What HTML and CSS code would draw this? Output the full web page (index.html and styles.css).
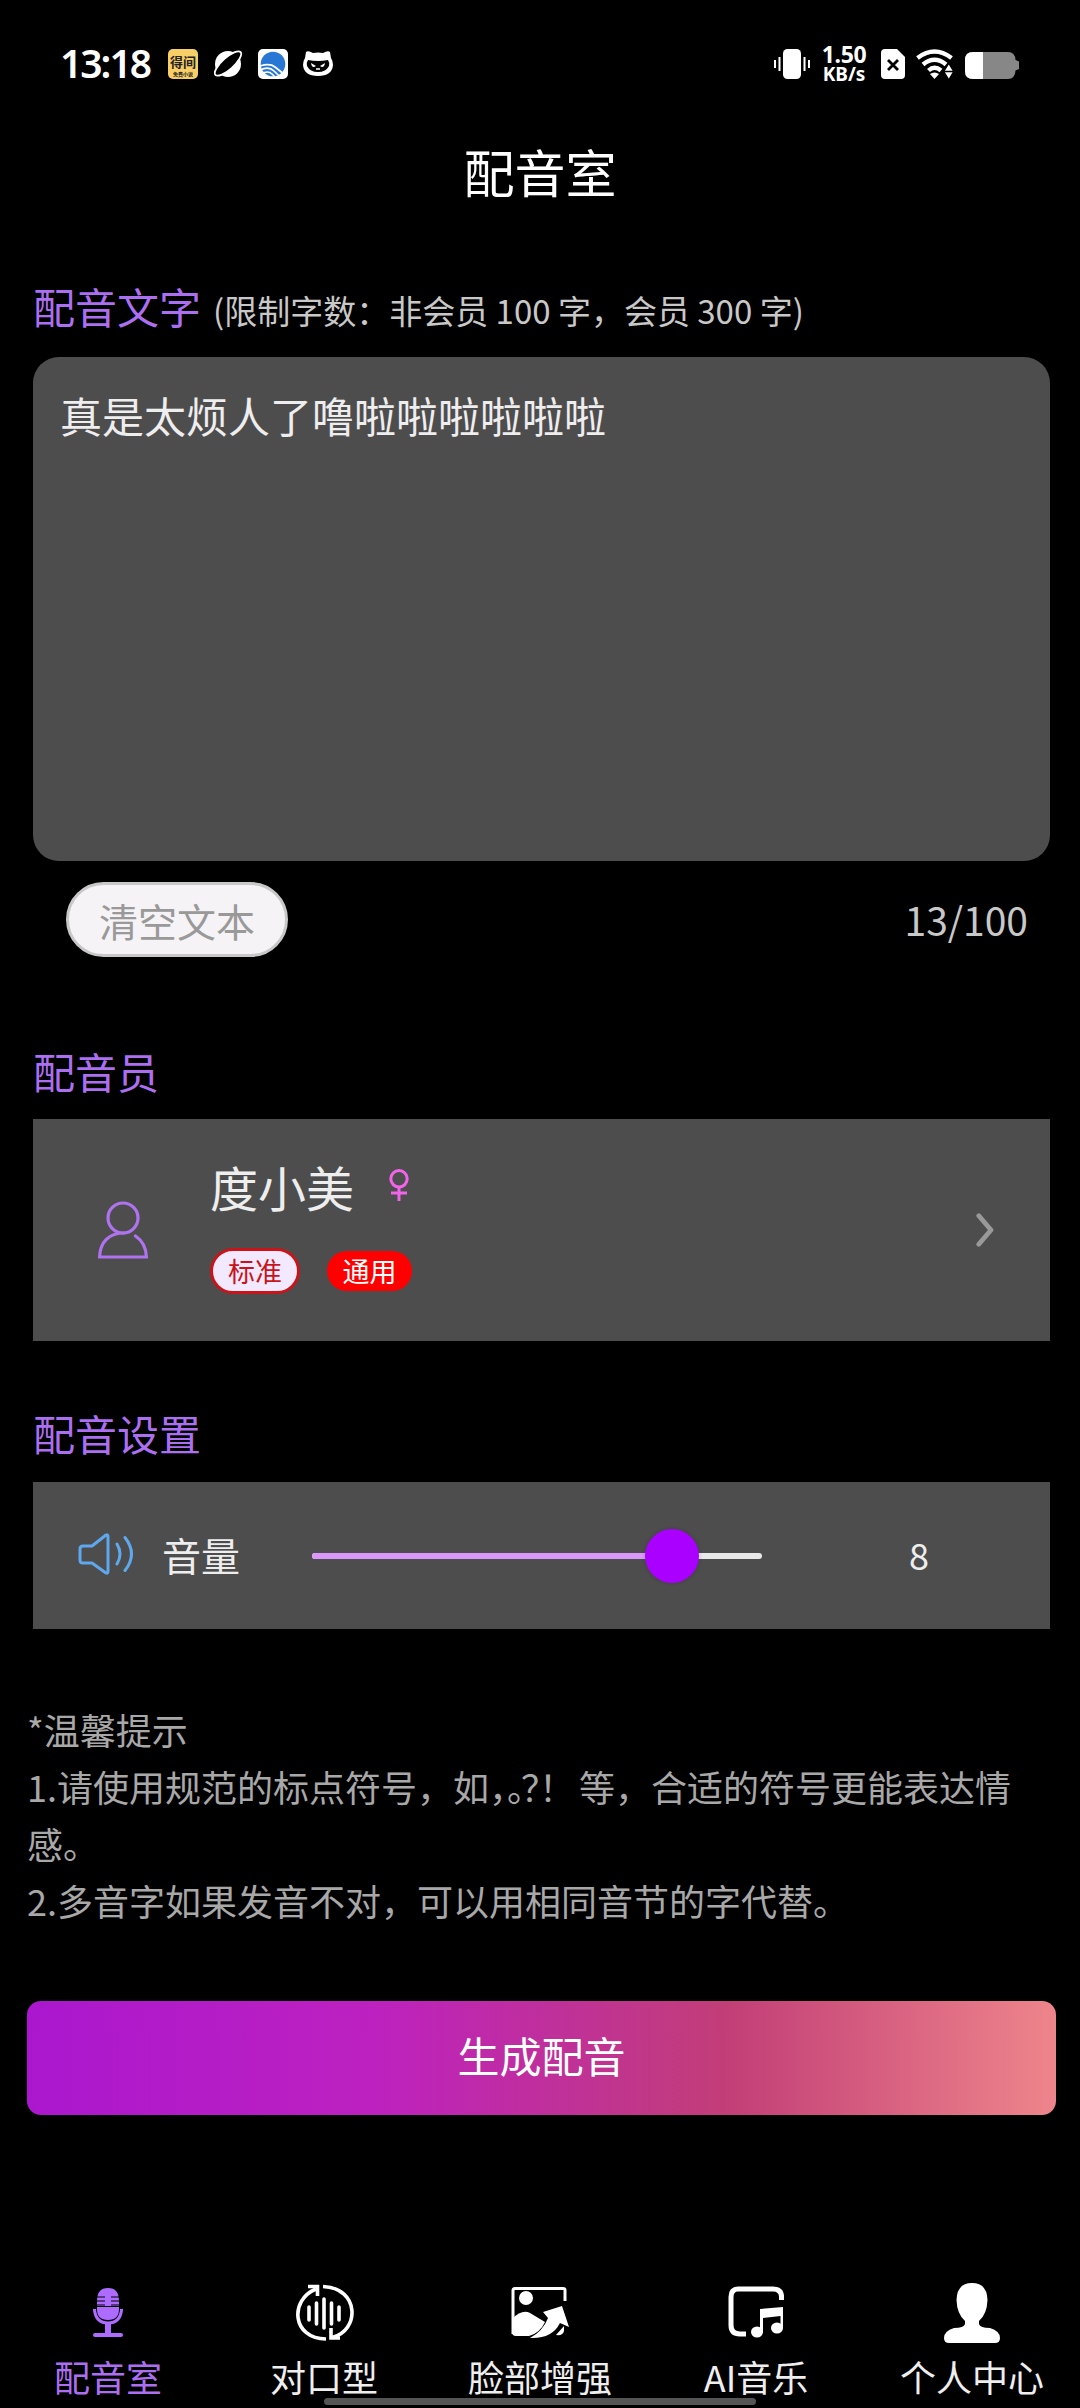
FILE: index.html
```html
<!DOCTYPE html>
<html lang="zh-CN">
<head>
<meta charset="utf-8">
<title>配音室</title>
<link rel="stylesheet" href="styles.css">
</head>
<body>
<header class="status">
  <span class="clock">13:18</span>
  <svg class="app" width="30" height="30" viewBox="0 0 30 30"><rect width="30" height="30" rx="5" fill="#f8ce66"/><text x="15" y="18" class="app-name">得间</text><text x="15" y="27" class="app-sub">免费小说</text></svg>
  <svg class="planet" width="30" height="28" viewBox="0 0 30 28"><circle cx="15" cy="14" r="13" fill="#fff"/><ellipse cx="15" cy="13.500" rx="17" ry="5.800" transform="rotate(-42 15 13.500)" fill="#000" stroke="#fff" stroke-width="1.800"/></svg>
  <svg class="browser" width="30" height="30" viewBox="0 0 30 30"><rect width="30" height="30" rx="5" fill="#fff"/><circle cx="15" cy="15" r="12.300" fill="#2977d4"/><path d="M2 17Q12 14 17 18T27 26M2 21Q11 17 16 22T24 29M3 25Q10 21 14 25T19 30" fill="none" stroke="#fff" stroke-width="1.700"/></svg>
  <svg class="cat" width="30" height="26" viewBox="0 0 30 26"><path d="M3 1Q5-1 10 2Q15 1 20 2Q25-1 27 1L28 7Q30 10 30 14Q29 25 15 25T0 14Q0 10 2 7Z" fill="#fff"/><path d="M5 9Q10 10 15 10T25 9Q27 12 26 15Q23 21 15 21T4 15Q3 12 5 9Z" fill="#000"/><path d="M8 12L13 15Q9 18 8 12ZM22 12L17 15Q21 18 22 12Z" fill="#fff"/><path d="M13 18H17" stroke="#fff" stroke-width="1.500"/></svg>
  <span class="spacer"></span>
  <svg class="vibrate" width="36" height="30" viewBox="0 0 36 30"><rect x="9" width="18" height="30" rx="4.500" fill="#fff"/><path d="M1 11V19M5.500 8V22M30.500 8V22M35 11V19" stroke="#fff" stroke-width="2"/></svg>
  <div class="speed"><b>1.50</b><i>KB/s</i></div>
  <svg class="sim" width="24" height="30" viewBox="0 0 24 30"><path d="M4 0H16L24 8V26Q24 30 20 30H4Q0 30 0 26V4Q0 0 4 0Z" fill="#fff"/><path d="M7 11L17 21M17 11L7 21" stroke="#000" stroke-width="2.800"/></svg>
  <svg class="wifi" width="38" height="30" viewBox="0 0 38 30"><g fill="none" stroke="#fff" stroke-width="4.400"><path d="M1.500 9Q18.500-4 35.500 9"/><path d="M7 15.500Q18.500 6 30 15.500"/><path d="M12.500 21.500Q18.500 16 25 21.500"/></g><path d="M14 25Q18.500 22 23 25L18.500 30Z" fill="#fff"/><path d="M27.500 22.500L32.800 14L38 22.500ZM27.500 22.500L32.800 31L38 22.500Z" fill="#fff" stroke="#000" stroke-width="1.500"/></svg>
  <svg class="battery" width="54" height="27" viewBox="0 0 54 27"><path d="M8 0H43Q50 0 50.500 8L54 9.500V17L50.500 18.500Q50 27 43 27H8Q0 27 0 19V8Q0 0 8 0Z" fill="#878787"/><path d="M8 0H18V27H8Q0 27 0 19V8Q0 0 8 0Z" fill="#fff"/></svg>
</header>
<h1 class="title">配音室</h1>
<main>
  <h2 class="label first">配音文字<small>(限制字数：非会员 100 字，会员 300 字)</small></h2>
  <div class="textbox">真是太烦人了噜啦啦啦啦啦啦</div>
  <div class="textbar"><button class="clear">清空文本</button><span class="count">13/100</span></div>
  <h2 class="label voice-label">配音员</h2>
  <section class="card voice">
    <svg class="avatar" width="50" height="58" viewBox="0 0 50 58" fill="none" stroke="#b073f0" stroke-width="3.200"><circle cx="25" cy="17" r="15"/><path d="M26 32C11 32 2 41 1.600 56H48.400Q48 42 37.500 35" stroke-linecap="round"/></svg>
    <div class="info">
      <div class="name">度小美<svg width="20" height="32" viewBox="0 0 20 32" fill="none" stroke="#f265ea" stroke-width="3"><circle cx="10" cy="9.800" r="8.200"/><path d="M10 18V32M2 24H18"/></svg></div>
      <div class="tags"><span class="tag outline">标准</span><span class="tag solid">通用</span></div>
    </div>
    <svg class="chevron" width="18" height="34" viewBox="0 0 18 34" fill="none" stroke="#999" stroke-width="4.800" stroke-linecap="round" stroke-linejoin="round"><path d="M2.800 2.800L15 17L2.800 31.200"/></svg>
  </section>
  <h2 class="label set-label">配音设置</h2>
  <section class="card volume">
    <svg class="speaker" width="56" height="42" viewBox="0 0 56 42" fill="none" stroke="#5fa8ee" stroke-width="3" stroke-linejoin="round" stroke-linecap="round"><path d="M5 13H14L28 2Q30 1 30 4V38Q30 41 28 40L14 30H5Q2 30 2 27V16Q2 13 5 13Z"/><path d="M39 11Q45 21 39 31M47 4.500Q60 21 47 37.500"/></svg>
    <span class="vol-name">音量</span>
    <div class="slider"><div class="fill" style="width:80%"><span class="thumb"></span></div></div>
    <span class="vol-value">8</span>
  </section>
  <div class="tips"><p>*温馨提示</p><p>1.请使用规范的标点符号，如<span class="half">，</span><span class="half">。</span><span class="half mid">？</span><span class="mark mid">！</span>等，合适的符号更能表达情感。</p><p>2.多音字如果发音不对，可以用相同音节的字代替。</p></div>
  <button class="generate">生成配音</button>
</main>
<nav class="nav">
  <a class="tab active"><svg width="60" height="62" viewBox="0 0 60 62"><path d="M19 19Q19 6 30 6T41 19V24H19ZM19 25H41V27Q41 38 30 38T19 27Z" fill="#ad6cff"/><path d="M19 15H27M33 15H41M19 19H27M33 19H41M19 23H27M33 23H41" stroke="#000" stroke-width="1"/><path d="M16.500 27V28Q18 41 30 41T43.500 28V27" fill="none" stroke="#ad6cff" stroke-width="3"/><path d="M27 41H33V51H43Q45 51 45 53T43 55H17Q15 55 15 53T17 51H27Z" fill="#ad6cff"/></svg>配音室</a>
  <a class="tab"><svg width="60" height="62" viewBox="0 0 60 62" fill="none" stroke="#fff" stroke-width="3.600"><path d="M22 7C-5 18-2 57 32 57M29 4.500C66 6 66 49 38 55.500"/><path d="M14 4.500H23.500V14M46 56H37V46"/><path d="M15 25V38M22.500 21V42M30 17V46M37.500 21V42M45 25V38" stroke-linecap="round"/></svg>对口型</a>
  <a class="tab"><svg width="60" height="62" viewBox="0 0 60 62"><path d="M55 19V8Q55 6.500 53 6.500H5Q3 6.500 3 8.500V52" fill="none" stroke="#fff" stroke-width="3"/><circle cx="16" cy="16" r="7" fill="#fff"/><path d="M2 37Q12 27 20 31L35 40Q30 51 19 54H6Q2 54 2 50Z" fill="#fff"/><path d="M20 56Q33 49 38 36L33 30L52 24L59 45L50 41Q42 57 20 56ZM46 53L54 44V49Q53 54 46 53Z" fill="#fff"/></svg>脸部增强</a>
  <a class="tab"><svg width="60" height="62" viewBox="0 0 60 62"><path d="M55.500 18V15Q55.500 7 47 7H12Q5 7 5 15V43Q5 52 14 52H20" fill="none" stroke="#fff" stroke-width="5"/><ellipse cx="31" cy="50" rx="6" ry="5.500" fill="#fff"/><ellipse cx="51" cy="46" rx="6" ry="5.500" fill="#fff"/><path d="M34 27L57 25V46H54.500V34L37 36V51H34Z" fill="#fff"/></svg>AI音乐</a>
  <a class="tab"><svg width="60" height="62" viewBox="0 0 60 62"><path d="M30 1Q45 1 45.500 18Q45 32 37 39V42Q38 46 48 46Q58 49 58 56Q58 61 53 61H7Q2 61 2 56Q2 49 12 46Q22 46 23 42V39Q15 32 14.500 18Q15 1 30 1Z" fill="#fff"/></svg>个人中心</a>
  <span class="home"></span>
</nav>
</body>
</html>
```
FILE: styles.css
```css
* { box-sizing: border-box; }
body { margin: 0; width: 1080px; height: 2408px; overflow: hidden; background: #000; color: #eee; font-family: "Noto Sans CJK SC", sans-serif; display: flex; flex-direction: column; }
h1, h2, p { margin: 0; font-weight: 400; }
button { font-family: inherit; padding: 0; border: 0; }
svg { display: block; flex: none; }

.status { height: 128px; padding: 0 61px 0 60px; display: flex; align-items: center; color: #fff; font-family: "Noto Sans", sans-serif; }
.clock { width: 108px; margin-top: -3px; font-size: 39px; font-weight: 600; letter-spacing: -2px; }
.app-name { font: 700 13px "Noto Sans CJK SC", sans-serif; text-anchor: middle; fill: #222; }
.app-sub { font: 700 5px "Noto Sans CJK SC", sans-serif; text-anchor: middle; fill: #222; }
.planet { margin-left: 15px; }
.browser { margin-left: 15px; }
.cat { margin-left: 15px; }
.spacer { flex: 1; }
.speed { width: 46px; margin: -1px 0 0 11px; display: flex; flex-direction: column; align-items: center; }
.speed b { font-size: 23px; line-height: 20px; font-weight: 700; letter-spacing: -0.3px; }
.speed i { font-size: 19px; line-height: 20px; font-weight: 700; font-style: normal; }
.sim { margin-left: 14px; }
.wifi { margin-left: 11px; }
.battery { margin-left: 11px; margin-top: 3px; }

.title { height: 93px; font-size: 51px; line-height: 87px; text-align: center; color: #fff; }
main { padding: 0 27px; }
.label { margin-left: 6px; font-size: 42px; line-height: 60px; color: #ad6ff2; }
.label small { margin-left: 12px; font-size: 33px; line-height: 0; color: #c8c8c8; }
.first { height: 60px; margin-top: 55px; }
.textbox { width: 1017px; height: 504px; margin: 21px 0 0 6px; padding: 28px 27px; border-radius: 26px; background: #4e4d4e; font-size: 42px; line-height: 60px; }
.textbar { height: 75px; margin: 21px 25px 0 39px; display: flex; align-items: center; justify-content: space-between; }
.clear { width: 222px; height: 75px; border: 3px solid #c9c8c9; border-radius: 38px; background: #f5f3f5; color: #999; font-size: 39px; line-height: 68px; }
.count { margin-top: -2px; font-size: 39px; color: #c8c8c8; }
.voice-label { margin-top: 84px; }
.card { width: 1017px; margin-left: 6px; background: #4d4d4d; display: flex; }
.voice { height: 222px; margin-top: 18px; padding-left: 65px; }
.avatar { margin-top: 82px; }
.info { margin-left: 62px; flex: 1; }
.name { height: 70px; margin-top: 32px; display: flex; align-items: center; font-size: 48px; }
.name svg { margin: -3px 0 0 35px; }
.tags { height: 46px; margin-top: 27px; display: flex; align-items: center; gap: 27px; font-size: 27px; text-align: center; }
.tag.outline { width: 90px; height: 46px; border: 3px solid #c91419; border-radius: 23px; background: #f2e9ff; color: #c91419; line-height: 40px; }
.tag.solid { width: 85px; height: 40px; border-radius: 20px; background: #f00; color: #fff; line-height: 40px; }
.chevron { margin: 94px 56px 0 0; }
.set-label { margin-top: 62px; }
.volume { height: 147px; margin-top: 19px; align-items: center; }
.speaker { margin: -3px 0 0 45px; }
.vol-name { width: 150px; margin: -4px 0 0 28px; font-size: 39px; }
.slider { width: 450px; height: 6px; border-radius: 3px; background: #e9e9e9; }
.fill { position: relative; height: 6px; border-radius: 3px; background: #da99fa; }
.thumb { position: absolute; right: -27px; top: -24px; width: 54px; height: 54px; border-radius: 50%; background: #a900ff; box-shadow: 0 0 4px #0003; }
.vol-value { width: 60px; margin: -3px 0 0 127px; text-align: center; font-size: 36px; }
.tips { width: 1010px; margin-top: 72px; font-size: 36px; line-height: 57px; color: #a8a8a8; }
.half { display: inline-block; width: 18px; white-space: nowrap; text-spacing-trim: space-all; }
.mark { display: inline-block; width: 36px; }
.mid { text-indent: -4px; }
.generate { display: block; width: 1029px; height: 114px; margin-top: 72px; padding-bottom: 7px; border-radius: 14px; background: linear-gradient(90deg, #aa17ce, #bd21bf 34%, #c23e77 68%, #ee858b); color: #fff; font-size: 42px; }

.nav { position: relative; flex: none; height: 132px; margin-top: auto; display: flex; margin-bottom: -7px; }
.tab { width: 216px; display: flex; flex-direction: column; align-items: center; font-size: 36px; line-height: 54px; }
.tab svg { margin: -1px 0 5px; }
.active { color: #ad6ff2; }
.home { position: absolute; left: 324px; top: 115px; width: 432px; height: 7px; border-radius: 4px; background: #555; }
```
